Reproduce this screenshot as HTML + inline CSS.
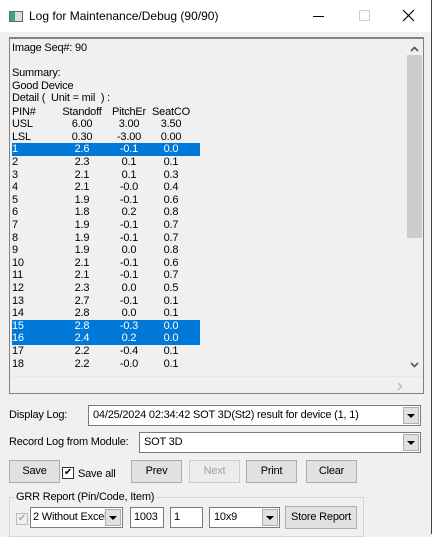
<!DOCTYPE html><html><head><style>
*{margin:0;padding:0;box-sizing:border-box}
body{width:432px;height:534px;background:#f0f0f0;font-family:"Liberation Sans",sans-serif;font-size:11px;position:relative;overflow:hidden;color:#000;letter-spacing:-0.2px}
.a{position:absolute}
.title{left:0;top:0;width:432px;height:32px;background:#fff}
.tb{position:absolute;white-space:nowrap}
.ln{position:absolute;left:0;height:12.6px;line-height:12.6px;white-space:nowrap}
.c{position:absolute;text-align:center}
.hl{background:#0078d7;color:#fff;width:188px}
.btn{position:absolute;background:#e1e1e1;border:1px solid #adadad;text-align:center;line-height:20px}
.cb{position:absolute;background:#fff;border:1px solid #7a7a7a;line-height:18px;padding-left:4px;white-space:nowrap;overflow:hidden}
.dd{position:absolute;right:1px;top:1px;width:16px;height:17px;background:#e1e1e1;border:1px solid #adadad}
.dd:after{content:"";position:absolute;left:3px;top:6px;border-left:4px solid transparent;border-right:4px solid transparent;border-top:4px solid #000}
</style></head><body>
<div class="a title">
 <div class="a" style="left:9px;top:11px;width:14px;height:11px;border:1px solid #666;background:linear-gradient(90deg,#3a7 0 40%,#dde 40%)"></div>
 <div class="tb" style="left:29px;top:9px;font-size:12px;letter-spacing:0">Log for Maintenance/Debug (90/90)</div>
 <div class="a" style="left:313px;top:16px;width:11px;height:1px;background:#000"></div>
 <div class="a" style="left:359px;top:10px;width:11px;height:11px;border:1px solid #ccc"></div>
 <svg class="a" style="left:402px;top:9px" width="13" height="13"><path d="M1 1L12 12M12 1L1 12" stroke="#000" stroke-width="1.2"/></svg>
</div>
<div class="a" style="left:431px;top:0;width:1px;height:534px;background:#444"></div>
<div class="a" style="left:9px;top:37px;width:415px;height:357px;border:1px solid #828282;border-top:2px solid #828282;background:#f0f0f0">
 <div class="a" style="left:2px;top:3px;width:395px;height:335px">
  <div class="ln" style="top:0">Image Seq#: 90</div>
  <div class="ln" style="top:25.2px">Summary:</div>
  <div class="ln" style="top:37.8px">Good Device</div>
  <div class="ln" style="top:50.4px">Detail (&nbsp; Unit = mil&nbsp; ) :</div>
  <div id="rows"></div>
 </div>
 <div class="a" style="left:396px;top:0;width:17px;height:337px;background:#f0f0f0">
  <svg class="a" style="left:4px;top:7px" width="9" height="6"><path d="M1 5L4.5 1.5L8 5" stroke="#555" stroke-width="1.6" fill="none"/></svg>
  <div class="a" style="left:1px;top:16px;width:15px;height:183px;background:#cdcdcd"></div>
  <svg class="a" style="left:4px;top:323px" width="9" height="6"><path d="M1 1L4.5 4.5L8 1" stroke="#555" stroke-width="1.6" fill="none"/></svg>
 </div>
 <div class="a" style="left:0;top:337px;width:413px;height:16px;border-top:1px solid #e8e8e8">
  <svg class="a" style="left:387px;top:5px" width="6" height="9"><path d="M1 1L4.5 4.5L1 8" stroke="#bbb" stroke-width="1.4" fill="none"/></svg>
 </div>
</div>
<div class="tb" style="left:9px;top:409px">Display Log:</div>
<div class="cb" style="left:88px;top:405px;width:333px;height:21px">04/25/2024 02:34:42 SOT 3D(St2) result for device (1, 1)<div class="dd"></div></div>
<div class="tb" style="left:9px;top:436px">Record Log from Module:</div>
<div class="cb" style="left:139px;top:432px;width:282px;height:21px">SOT 3D<div class="dd"></div></div>
<div class="btn" style="left:9px;top:460px;width:51px;height:23px">Save</div>
<div class="a" style="left:62px;top:467px;width:12px;height:12px;border:1px solid #333;background:#fff;font-size:10px;line-height:10px;text-align:center">✔</div>
<div class="tb" style="left:78px;top:468px">Save all</div>
<div class="btn" style="left:131px;top:460px;width:51px;height:23px">Prev</div>
<div class="btn" style="left:189px;top:460px;width:51px;height:23px;color:#a0a0a0;background:#ececec;border-color:#ccc">Next</div>
<div class="btn" style="left:246px;top:460px;width:51px;height:23px">Print</div>
<div class="btn" style="left:306px;top:460px;width:51px;height:23px">Clear</div>
<div class="a" style="left:9px;top:497px;width:355px;height:40px;border:1px solid #d5d5d5"></div>
<div class="tb" style="left:14px;top:491px;background:#f0f0f0;padding:0 2px">GRR Report (Pin/Code, Item)</div>
<div class="a" style="left:16px;top:513px;width:12px;height:12px;border:1px solid #bbb;color:#aaa;font-size:10px;line-height:10px;text-align:center">✔</div>
<div class="cb" style="left:30px;top:507px;width:93px;height:21px;padding-left:2px"><span style="display:inline-block;width:72px;overflow:hidden">2 Without Excel</span><div class="dd"></div></div>
<div class="cb" style="left:130px;top:507px;width:34px;height:21px;padding-left:3px">1003</div>
<div class="cb" style="left:170px;top:507px;width:33px;height:21px;padding-left:3px">1</div>
<div class="cb" style="left:209px;top:507px;width:71px;height:21px">10x9<div class="dd"></div></div>
<div class="btn" style="left:285px;top:506px;width:72px;height:23px">Store Report</div>
<script>
var d=[["PIN#","Standoff","PitchEr","SeatCO"],["USL","6.00","3.00","3.50"],["LSL","0.30","-3.00","0.00"],
["1","2.6","-0.1","0.0",1],["2","2.3","0.1","0.1"],["3","2.1","0.1","0.3"],["4","2.1","-0.0","0.4"],["5","1.9","-0.1","0.6"],["6","1.8","0.2","0.8"],["7","1.9","-0.1","0.7"],["8","1.9","-0.1","0.7"],["9","1.9","0.0","0.8"],["10","2.1","-0.1","0.6"],["11","2.1","-0.1","0.7"],["12","2.3","0.0","0.5"],["13","2.7","-0.1","0.1"],["14","2.8","0.0","0.1"],["15","2.8","-0.3","0.0",1],["16","2.4","0.2","0.0",1],["17","2.2","-0.4","0.1"],["18","2.2","-0.0","0.1"]];
var h="";d.forEach(function(r,i){h+='<div class="ln'+(r[4]?' hl':'')+'" style="top:'+(63.5+i*12.6)+'px;width:188px"><span class="c" style="left:0;text-align:left">'+r[0]+'</span><span class="c" style="left:44px;width:52px">'+r[1]+'</span><span class="c" style="left:96px;width:42px">'+r[2]+'</span><span class="c" style="left:138px;width:42px">'+r[3]+'</span></div>'});
document.getElementById("rows").innerHTML=h;
</script>
</body></html>
